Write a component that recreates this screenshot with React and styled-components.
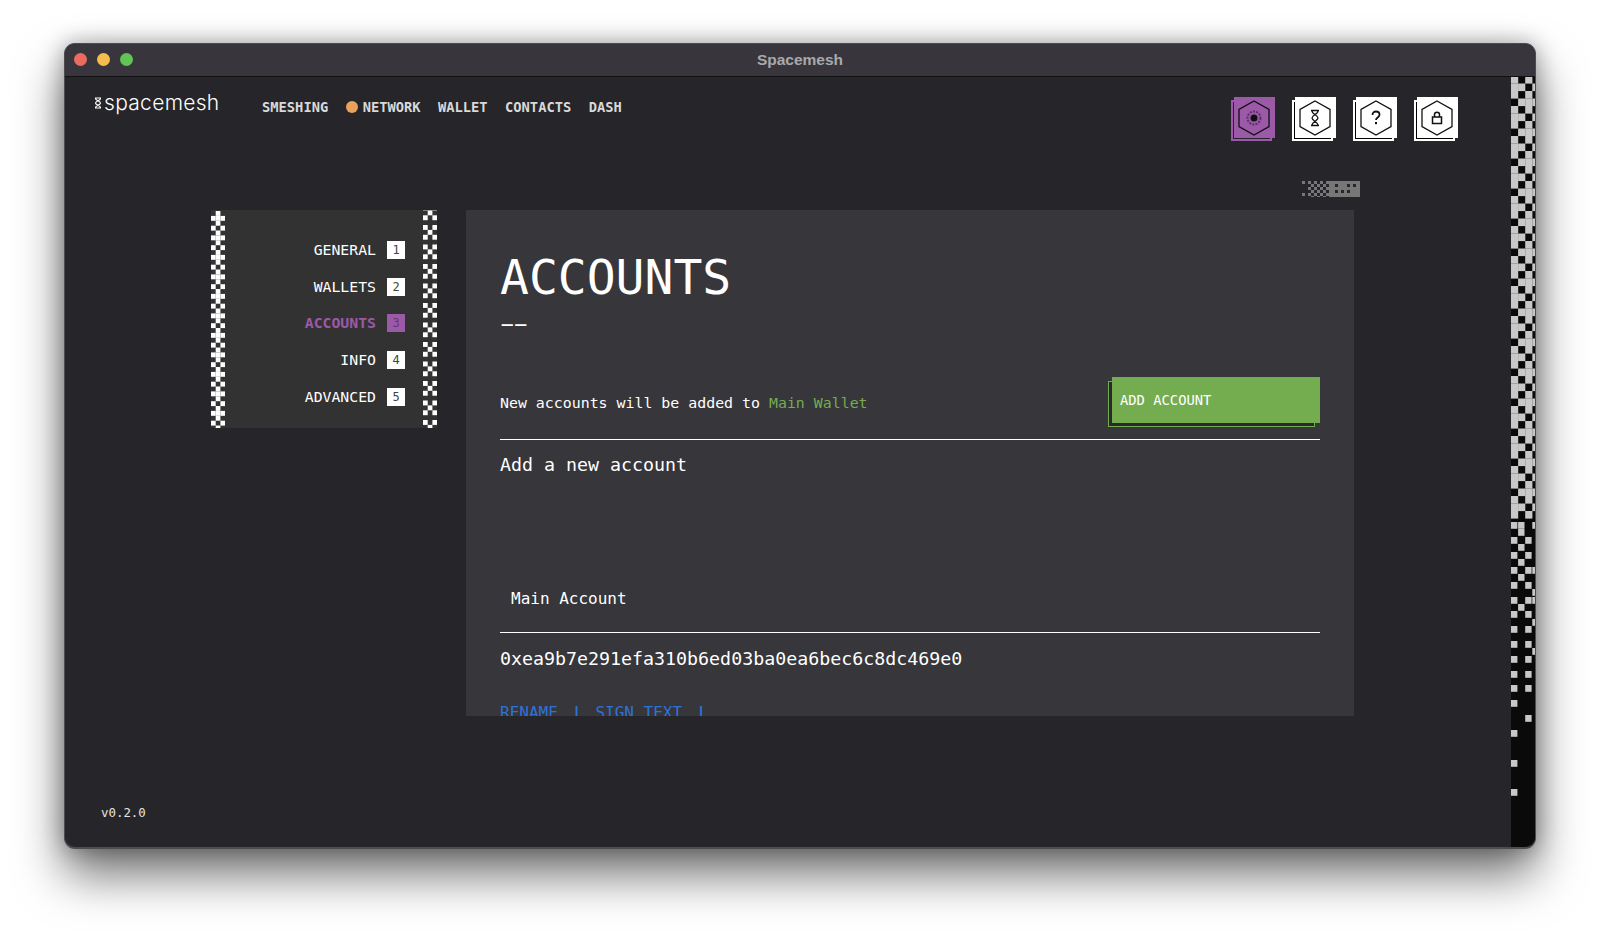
import React from "react";
import styled, { createGlobalStyle } from "styled-components";

const Global = createGlobalStyle`
  html, body { margin: 0; padding: 0; background: #fff; }
  #root { width: 1600px; height: 933px; overflow: hidden; }
`;
const MONO = `"DejaVu Sans Mono", "Liberation Mono", monospace`;

const Page = styled.div`
  height: 933px; box-sizing: border-box; padding: 43px 64px 84px;
`;
const Win = styled.div`
  height: 806px; display: flex; flex-direction: column; border-radius: 11px; overflow: hidden;
  background: #25252a; box-shadow: 0 26px 48px rgba(0,0,0,.55), 0 0 22px rgba(0,0,0,.32);
  border: 1px solid #4d4d50; border-width: 1px 1px 2px 1px; box-sizing: border-box;
`;
const TitleBar = styled.div`
  height: 33px; flex: none; position: relative; background: #38363c; border-bottom: 1px solid #111; box-sizing: border-box;
  display: flex; align-items: center; justify-content: center;
  font: 700 15.5px "Liberation Sans", Arial, sans-serif; color: #a9a9ab;
`;
const Lights = styled.div`
  position: absolute; left: 9px; top: 9px; display: flex; gap: 10px;
`;
const Light = styled.span`
  width: 13px; height: 13px; border-radius: 50%; background: ${p => p.$c};
`;
const Body = styled.div`
  flex: 1; min-height: 0; display: flex;
`;
const Main = styled.div`
  flex: 1; min-width: 0; display: flex; flex-direction: column; position: relative;
`;
const Header = styled.div`
  height: 133px; flex: none; display: flex; align-items: flex-start; box-sizing: border-box;
  padding: 17px 0 0 29px;
`;
const Logo = styled.div`
  display: flex; align-items: center; gap: 1px; width: 168px; height: 24px; margin-top: -3px; color: #fff;
  font: 300 21px "Inter", sans-serif; letter-spacing: .3px; line-height: 24px;
`;
const Nav = styled.nav`
  display: flex; align-items: center; gap: 17.4px; height: 20px; margin-top: 3px;
  font: 700 13.75px ${MONO}; color: #d9d9d9;
`;
const NavItem = styled.span`
  display: flex; align-items: center; gap: 5px;
`;
const Dot = styled.span`
  width: 12px; height: 12px; border-radius: 50%; background: #e9a15e;
`;
const Icons = styled.div`
  margin-left: auto; margin-right: 53px; margin-top: 3px; display: flex; gap: 20px;
`;
const IconBtn = styled.div`
  width: 41px; height: 41px; position: relative;
`;
const IconBack = styled.div`
  position: absolute; left: -3px; top: 3px; width: 41px; height: 41px; box-sizing: border-box;
  border: 2px solid ${p => p.$active ? "#9b59a8" : "#fff"}; background: ${p => p.$active ? "#25252a" : "#000"};
`;
const IconFace = styled.div`
  position: relative; width: 41px; height: 41px; background: ${p => p.$active ? "#9b59a8" : "#fff"};
  display: flex; align-items: center; justify-content: center;
`;
const Content = styled.div`
  display: flex; align-items: flex-start; padding-left: 146px; gap: 29px;
`;
const Side = styled.aside`
  width: 226px; height: 218px; flex: none; background: #333232; display: flex; justify-content: space-between;
`;
const SideList = styled.div`
  flex: 1; display: flex; flex-direction: column; align-items: flex-end; padding: 31px 18px 0 0;
`;
const SideItem = styled.div`
  height: 18px; margin-bottom: 18.7px; display: flex; align-items: center; gap: 11px;
  font: ${p => p.$active ? 700 : 400} 14.8px/18px ${MONO}; color: ${p => p.$active ? "#9b59a8" : "#fff"};
`;
const Num = styled.span`
  width: 18px; height: 18px; display: flex; align-items: center; justify-content: center;
  font: 400 12px ${MONO}; color: ${p => p.$active ? "#5f3a68" : "#444"}; background: ${p => p.$active ? "#9b59a8" : "#fff"};
`;
const PanelWrap = styled.div`
  position: relative; width: 888px; height: 506px; flex: none;
`;
const Corner = styled.svg`
  position: absolute; right: -6px; top: -29px;
`;
const Panel = styled.section`
  height: 100%; background: #36363b; overflow: hidden; box-sizing: border-box; padding: 39px 34px 0; color: #fff; font-family: ${MONO};
`;
const H1 = styled.h1`
  margin: 0; font: 400 48px/56px ${MONO}; height: 56px;
`;
const Dash = styled.div`
  font: 400 22px/24px ${MONO}; height: 24px; margin: 7px 0 0 -6px; letter-spacing: -6.5px;
  transform: scaleX(2); transform-origin: left center;
`;
const AddRow = styled.div`
  margin-top: 41px; height: 63px; box-sizing: border-box; border-bottom: 1px solid #fff; display: flex; justify-content: space-between; align-items: flex-start;
`;
const AddText = styled.div`
  font: 400 14.9px/20px ${MONO}; margin-top: 16px;
`;
const Green = styled.span`
  color: #74ac50;
`;
const AddBtn = styled.div`
  width: 208px; height: 46px; position: relative;
`;
const AddBack = styled.div`
  position: absolute; left: -4px; top: 4px; width: 207px; height: 46px; box-sizing: border-box;
  border: 1.5px solid #74ac50; background: #2a2a2e;
`;
const AddFace = styled.button`
  position: relative; display: block; width: 100%; height: 46px; border: 0; padding: 0 0 0 8px; text-align: left;
  background: #74ac50; color: #fff; font: 400 13.8px ${MONO};
`;
const Sub = styled.div`
  font: 400 18.3px/24px ${MONO}; margin-top: 13px;
`;
const AccName = styled.div`
  font: 400 16px/22px ${MONO}; margin: 111px 0 0 11px;
`;
const Rule = styled.div`
  height: 1px; background: #fff; margin-top: 22px;
`;
const Addr = styled.div`
  font: 400 18.3px/24px ${MONO}; margin-top: 14px;
`;
const Links = styled.div`
  display: flex; margin-top: 32px; font: 400 16px/20px ${MONO}; color: #2f72d6;
`;
const LinkItem = styled.span`
  &::after { content: "|"; margin: 0 14px; font-weight: 700; }
`;
const Version = styled.div`
  position: absolute; left: 36px; bottom: 26px; font: 400 12.4px/16px ${MONO}; color: #e6e6e6;
`;
const StripSvg = styled.svg`
  flex: none; display: block; background: #0a0a0a;
`;
const SideSvg = styled.svg`
  flex: none; display: block;
`;

const Hex = ({ children }) => (
  <svg width="41" height="41" viewBox="0 0 41 41">
    <polygon points="20,4 35,12.500 35,29.500 20,38 5,29.500 5,12.500" fill="none" stroke="#111" strokeWidth="1.300" />
    {children}
  </svg>
);

const stripTop = () => {
  const s = 7.5, r = [];
  const rows = ["0101", "0010", "0101", "1000"];
  for (let i = 0; i < 59; i++) {
    [...rows[i % 4]].forEach((c, j) => {
      if (c === "0") r.push([j, i * s]);
    });
  }
  return r;
};
const fade = [
  [446, [0, 1, 3]], [453, [1]], [461, [0, 2]], [468, [1]], [476, [0, 2]], [483, [1]],
  [491, [0, 2, 3]], [498, [1]], [506, [0, 2]], [513, [3]], [521, [0, 2, 3]], [528, [1]], [535, [0, 2]], [543, [3]],
  [550, [0, 2]], [565, [0, 2]], [572, [3]], [580, [0, 2]], [595, [0, 2]], [609, [0, 2]],
  [624, [0]], [639, [2]], [654, [0]], [684, [0]], [713, [0]],
];
const Strip = () => {
  const cols = [0, 7.1, 14.2, 21.3];
  const top = stripTop().filter(([, y]) => y < 440);
  return (
    <StripSvg width="24" height="770" viewBox="0 1 24 770">
      {top.map(([c, y], i) => <rect key={i} x={cols[c]} y={y} width="7.2" height="7.6" fill="#c8c8c8" />)}
      {fade.flatMap(([y, cs], i) => cs.map(c => <rect key={i + "-" + c} x={cols[c]} y={y} width="6.400" height="6.800" fill="#c8c8c8" />))}
    </StripSvg>
  );
};

const SidePattern = ({ variant }) => {
  const h = 218, tile = 19.5, w = 4.7, rh = 4.9;
  const rects = [];
  const tiles = {
    plus: [[1, 0], [0, 1], [1, 1], [2, 1], [1, 2], [0, 3], [2, 3]],
    x: [[0, 0], [2, 0], [1, 1], [0, 2], [2, 2]],
  };
  const offset = variant === "x" ? -4.5 : 1;
  for (let k = 0; k < 12; k++) {
    tiles[variant].forEach(([c, r]) => {
      const y = offset + k * tile + r * rh;
      if (y < h - 2) rects.push([c * w, y]);
    });
  }
  return (
    <SideSvg width="14" height={h} viewBox={`0 0 14 ${h}`}>
      {rects.map(([x, y], i) => <rect key={i} x={x} y={y} width={w} height={rh} fill="#fff" />)}
    </SideSvg>
  );
};

const cornerDark = new Set(["33,3", "45,3", "51,3", "33,9", "39,9", "45,9"]);
const CornerArt = () => {
  const r = [];
  for (let y = 0; y < 16; y += 3) for (let x = 0; x < 58; x += 3) {
    const k = x / 3 + y / 3;
    let on;
    if (x >= 27) on = !cornerDark.has(`${x},${y}`);
    else if (x >= 9) on = k % 2 === 0;
    else on = (x === 0 && y % 12 === 0) || (x === 6 && y % 6 === 0);
    if (on) r.push([x, y]);
  }
  return (
    <Corner width="58" height="16" viewBox="0 0 58 16">
      {r.map(([x, y], i) => <rect key={i} x={x} y={y} width="3" height="3" fill="#777" />)}
    </Corner>
  );
};

const items = ["GENERAL", "WALLETS", "ACCOUNTS", "INFO", "ADVANCED"];
const I = ({ active, children }) => (
  <IconBtn>
    <IconBack $active={active} />
    <IconFace $active={active}><Hex>{children}</Hex></IconFace>
  </IconBtn>
);

export default function App() {
  return (
    <>
      <Global />
      <Page>
        <Win>
          <TitleBar>
            <Lights>
              <Light $c="#ee6a5f" /><Light $c="#f5bd4f" /><Light $c="#61c454" />
            </Lights>
            Spacemesh
          </TitleBar>
          <Body>
            <Main>
              <Header>
                <Logo>
                  <svg width="9" height="12" viewBox="0 0 9 12">
                    <path d="M1 1h6M1 11h6M1.500 1.500c0 2 5 2.500 5 4.500s-5 2.500-5 4.500M6.500 1.500c0 2-5 2.500-5 4.500s5 2.500 5 4.500" stroke="#fff" strokeWidth="1.200" fill="none" />
                  </svg>
                  spacemesh
                </Logo>
                <Nav>
                  <NavItem>SMESHING</NavItem>
                  <NavItem><Dot />NETWORK</NavItem>
                  <NavItem>WALLET</NavItem>
                  <NavItem>CONTACTS</NavItem>
                  <NavItem>DASH</NavItem>
                </Nav>
                <Icons>
                  <I active>
                    <circle cx="20" cy="21" r="6.500" fill="none" stroke="#5d2f68" strokeWidth="2" strokeDasharray="2 1.200" />
                    <circle cx="20" cy="21" r="3.500" fill="#111" />
                  </I>
                  <I>
                    <path d="M16 13.500h8M16 28.500h8M17 14c0 3 6 4.500 6 7s-6 4-6 7M23 14c0 3-6 4.500-6 7s6 4 6 7" fill="none" stroke="#111" strokeWidth="1.300" />
                  </I>
                  <I>
                    <path d="M16.500 18c0-2.200 1.500-3.500 3.500-3.500s3.500 1.300 3.500 3.200c0 2.800-3.500 2.800-3.500 5.300" fill="none" stroke="#111" strokeWidth="1.800" />
                    <rect x="19" y="25" width="2" height="2.200" fill="#111" />
                  </I>
                  <I>
                    <rect x="15.500" y="20" width="9" height="6.500" fill="none" stroke="#111" strokeWidth="1.500" />
                    <path d="M17.500 20v-2.500c0-3 5-3 5 0V20" fill="none" stroke="#111" strokeWidth="1.500" />
                  </I>
                </Icons>
              </Header>
              <Content>
                <Side>
                  <SidePattern variant="plus" />
                  <SideList>
                    {items.map((t, i) => (
                      <SideItem key={t} $active={i === 2}>
                        {t}<Num $active={i === 2}>{i + 1}</Num>
                      </SideItem>
                    ))}
                  </SideList>
                  <SidePattern variant="x" />
                </Side>
                <PanelWrap>
                  <CornerArt />
                  <Panel>
                    <H1>ACCOUNTS</H1>
                    <Dash>--</Dash>
                    <AddRow>
                      <AddText>New accounts will be added to <Green>Main Wallet</Green></AddText>
                      <AddBtn>
                        <AddBack />
                        <AddFace>ADD ACCOUNT</AddFace>
                      </AddBtn>
                    </AddRow>
                    <Sub>Add a new account</Sub>
                    <AccName>Main Account</AccName>
                    <Rule />
                    <Addr>0xea9b7e291efa310b6ed03ba0ea6bec6c8dc469e0</Addr>
                    <Links>
                      <LinkItem>RENAME</LinkItem>
                      <LinkItem>SIGN TEXT</LinkItem>
                    </Links>
                  </Panel>
                </PanelWrap>
              </Content>
              <Version>v0.2.0</Version>
            </Main>
            <Strip />
          </Body>
        </Win>
      </Page>
    </>
  );
}
